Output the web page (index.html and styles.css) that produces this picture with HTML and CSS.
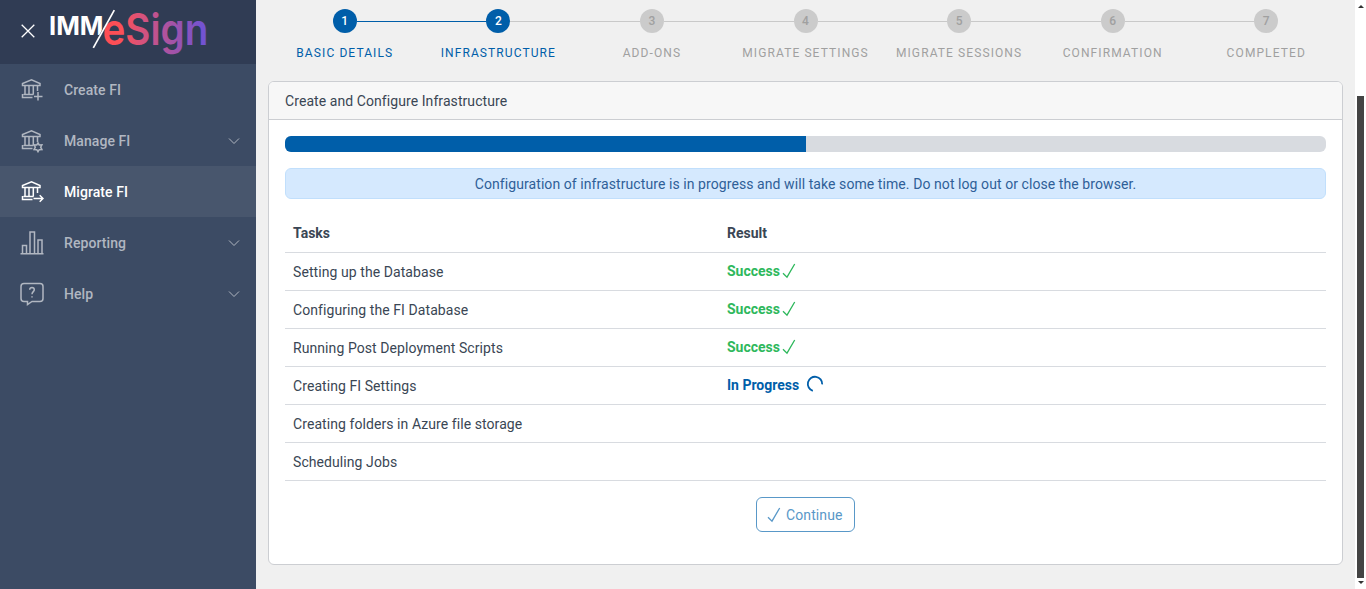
FILE: index.html
```html
<!DOCTYPE html>
<html lang="en">
<head>
<meta charset="utf-8">
<title>IMM eSign - Migrate FI</title>
<link rel="stylesheet" href="styles.css">
</head>
<body>
<svg class="defs" width="0" height="0" aria-hidden="true">
  <symbol id="bank" viewBox="0 0 24 24">
    <path d="M2.5 7.5V5.5L11.5 1.8 20 5.5V7.5ZM5 7.5V16.5M9 7.5V16.5M13.3 7.5V16.5M17.5 7.5V13M3.5 16.5H13.5M2.5 16V19.5H12.5"/>
  </symbol>
  <symbol id="chevron" viewBox="0 0 12 8"><path d="M1 1.5 6 6.5 11 1.5"/></symbol>
  <symbol id="check" viewBox="0 0 14 16"><path d="M1 10.2 5 14.2 12.7 1"/></symbol>
</svg>
<div class="app">
  <aside class="sidebar">
    <header class="brand">
      <svg class="close" viewBox="0 0 14 14"><path d="M.7.7 13.3 13.3M13.3.7.7 13.3"/></svg>
      <svg class="logo" viewBox="0 0 180 64">
        <defs>
          <linearGradient id="sunset" gradientUnits="userSpaceOnUse" x1="54" y1="0" x2="156" y2="0">
            <stop offset="0" stop-color="#ff4d54"/><stop offset=".18" stop-color="#fb5058"/>
            <stop offset=".36" stop-color="#d9527a"/><stop offset=".66" stop-color="#a553a6"/><stop offset="1" stop-color="#6e53d6"/>
          </linearGradient>
        </defs>
        <text class="logo-imm" x="-1" y="35" textLength="54.5" lengthAdjust="spacingAndGlyphs">IMM</text>
        <path class="slash-gap" d="M65.4 10 44.4 48"/>
        <text class="logo-esign" x="52.4" y="45" textLength="106" lengthAdjust="spacingAndGlyphs">eSign</text>
        <path class="slash" d="M64.3 10.2 43.3 47.8"/>
      </svg>
    </header>
    <nav class="menu">
      <a class="item"><svg class="icon" viewBox="0 0 24 24"><use href="#bank"/><path d="M18 14V22.5M14 18.5H22.5"/></svg><span class="label">Create FI</span></a>
      <a class="item"><svg class="icon" viewBox="0 0 24 24"><use href="#bank"/><path d="M18 14 19.2 15.9 21.9 15.8 20.7 18.2 21.9 20.6 19.2 20.7 18 22.7 16.8 20.7 14.1 20.6 15.3 18.2 14.1 15.8 16.8 15.9Z"/></svg><span class="label">Manage FI</span><svg class="chevron"><use href="#chevron"/></svg></a>
      <a class="item active"><svg class="icon" viewBox="0 0 24 24"><use href="#bank"/><path d="M13.5 18.5H23M19.7 15.2 23 18.5 19.7 21.8"/></svg><span class="label">Migrate FI</span></a>
      <a class="item"><svg class="icon" viewBox="0 0 24 24"><path d="M.5 22.7H23.5M2.5 22.5V14.5H6.5V22.5M10 22.5V1H14.5V22.5M18 22.5V9H22V22.5"/></svg><span class="label">Reporting</span><svg class="chevron"><use href="#chevron"/></svg></a>
      <a class="item"><svg class="icon" viewBox="0 0 24 24"><path d="M4 1.5H20Q23 1.5 23 4.5V16.5Q23 19.5 20 19.5H12L7.5 22.5V19.5H4Q1 19.5 1 16.5V4.5Q1 1.5 4 1.5Z"/><path d="M9.7 7.7Q9.9 5.6 12 5.6 14.3 5.7 14.3 7.8C14.3 9.6 12 9.8 12 12.3M12 14.2V15.6"/></svg><span class="label">Help</span><svg class="chevron"><use href="#chevron"/></svg></a>
    </nav>
  </aside>
  <main class="content">
    <ol class="steps">
      <li class="step done"><span class="dot">1</span><span class="name">Basic Details</span></li>
      <li class="step done current"><span class="dot">2</span><span class="name">Infrastructure</span></li>
      <li class="step"><span class="dot">3</span><span class="name">Add-ons</span></li>
      <li class="step"><span class="dot">4</span><span class="name">Migrate Settings</span></li>
      <li class="step"><span class="dot">5</span><span class="name">Migrate Sessions</span></li>
      <li class="step"><span class="dot">6</span><span class="name">Confirmation</span></li>
      <li class="step"><span class="dot">7</span><span class="name">Completed</span></li>
    </ol>
    <section class="card">
      <div class="card-header">Create and Configure Infrastructure</div>
      <div class="card-body">
        <div class="progress"><div class="bar" style="width:50.05%"></div></div>
        <div class="alert">Configuration of infrastructure is in progress and will take some time. Do not log out or close the browser.</div>
        <div class="tasks">
          <div class="row head"><span>Tasks</span><span>Result</span></div>
          <div class="row"><span>Setting up the Database</span><span class="result ok">Success<svg class="tick"><use href="#check"/></svg></span></div>
          <div class="row"><span>Configuring the FI Database</span><span class="result ok">Success<svg class="tick"><use href="#check"/></svg></span></div>
          <div class="row"><span>Running Post Deployment Scripts</span><span class="result ok">Success<svg class="tick"><use href="#check"/></svg></span></div>
          <div class="row"><span>Creating FI Settings</span><span class="result busy">In Progress<svg class="spinner" viewBox="0 0 18 18"><path d="M6.8 15.8A7.2 7.2 0 1 1 16.2 9.4"/></svg></span></div>
          <div class="row"><span>Creating folders in Azure file storage</span><span></span></div>
          <div class="row"><span>Scheduling Jobs</span><span></span></div>
        </div>
        <button class="continue"><svg class="tick"><use href="#check"/></svg>Continue</button>
      </div>
    </section>
  </main>
  <div class="scrollbar"><i class="arrow up"></i><i class="thumb"></i><i class="arrow down"></i></div>
</div>
</body>
</html>
```
FILE: styles.css
```css
* { box-sizing: border-box; }
body { margin: 0; font: 14px/21px Roboto, "Liberation Sans", sans-serif; letter-spacing: .075px; color: #3a4654; overflow: hidden; }
svg { fill: none; stroke: currentColor; flex: none; }
.defs { position: absolute; }
.app { display: flex; width: 1366px; height: 589px; background: #f0f0f0; }

.sidebar { width: 256px; background: #3c4b64; }
.brand { height: 64px; display: flex; background: #303c54; color: #fff; }
.close { width: 14px; height: 14px; margin: 24px 0 0 21px; stroke-width: 1.3; }
.logo { width: 180px; height: 64px; margin-left: 15px; letter-spacing: 0; }
.logo-imm { font: 700 26px Inter, sans-serif; fill: #fff; stroke: none; }
.logo-esign { font: 600 44px Inter, sans-serif; fill: url(#sunset); stroke: none; }
.slash { stroke-width: 1.7; }
.slash-gap { stroke: #303c54; stroke-width: 4; }
.item { display: flex; align-items: center; height: 51px; padding: 0 16px 0 20px; color: #b1b7c1; font-weight: 500; }
.item.active { background: #48566d; color: #fff; }
.icon { width: 24px; height: 24px; margin-right: 20px; stroke-width: 1.5; }
.label { flex: 1; padding-top: 1px; }
.chevron { width: 12px; height: 8px; stroke-width: 1; }

.content { width: 1099px; padding: 9px 12px 0; }
.steps { display: flex; margin: 0; padding: 0; list-style: none; }
.step { flex: 1; position: relative; display: flex; flex-direction: column; align-items: center; color: #a0a0a0; }
.step:not(:last-child)::after { content: ""; position: absolute; left: calc(50% + 12px); top: 12px; width: calc(100% - 24px); height: 1px; background: #c9c9c9; }
.step.done:not(.current)::after { background: #005ea9; }
.dot { width: 24px; height: 24px; border-radius: 50%; background: #cbcbcb; font: 500 12px/25px Roboto, sans-serif; text-align: center; }
.name { margin-top: 10px; font-size: 12px; line-height: 20px; letter-spacing: 1.1px; text-transform: uppercase; white-space: nowrap; }
.done { color: #005ea9; }
.done .dot { background: #005ea9; color: #fff; }

.card { height: 484px; margin-top: 18px; border: 1px solid #ccced2; border-radius: 6px; background: #fff; overflow: hidden; }
.card-header { height: 38px; padding: 8px 16px; line-height: 22px; background: #f7f7f7; border-bottom: 1px solid #ccced2; }
.card-body { display: flex; flex-direction: column; padding: 16px; }
.progress { height: 16px; border-radius: 6px; background: #d8dbe0; overflow: hidden; }
.bar { height: 100%; background: #005ea9; }
.alert { height: 31px; margin: 16px 0; border: 1px solid #c1dffc; border-radius: 6px; background: #d5e9fe; color: #2f5f98; line-height: 30px; text-align: center; }
.row { display: grid; grid-template-columns: 434px 1fr; height: 38px; padding: 0 8px; border-bottom: 1px solid #d8dbe0; line-height: 39px; }
.row.head { font-weight: 700; line-height: 37px; letter-spacing: 0; }
.result { display: flex; align-items: center; font-weight: 700; line-height: 37px; height: 37px; letter-spacing: 0; }
.ok { color: #2eb85c; }
.busy { color: #005ea9; }
.tick { width: 14px; height: 16px; stroke-width: 1.3; }
.result .tick { margin: -2px 0 0 2px; }
.spinner { width: 18px; height: 18px; margin: -3px 0 0 7px; stroke-width: 1.8; }
.continue { align-self: center; display: flex; align-items: center; gap: 5px; width: 99px; height: 35px; margin-top: 16px; padding: 0 10px; border: 1px solid #5998c8; border-radius: 6px; background: #fff; color: #5998c8; font: 14px Roboto, sans-serif; letter-spacing: .1px; }

.scrollbar { display: flex; flex-direction: column; align-items: center; width: 11px; background: #fff; }
.thumb { width: 7px; height: 482px; margin-top: 88px; background: #444; }
.arrow { border: 3px solid transparent; border-top-width: 0; width: 0; height: 3px; }
.up { border-bottom: 3px solid #333; margin-top: 5px; }
.down { border-top: 3px solid #333; border-bottom: 0; margin-top: 3px; }
```
